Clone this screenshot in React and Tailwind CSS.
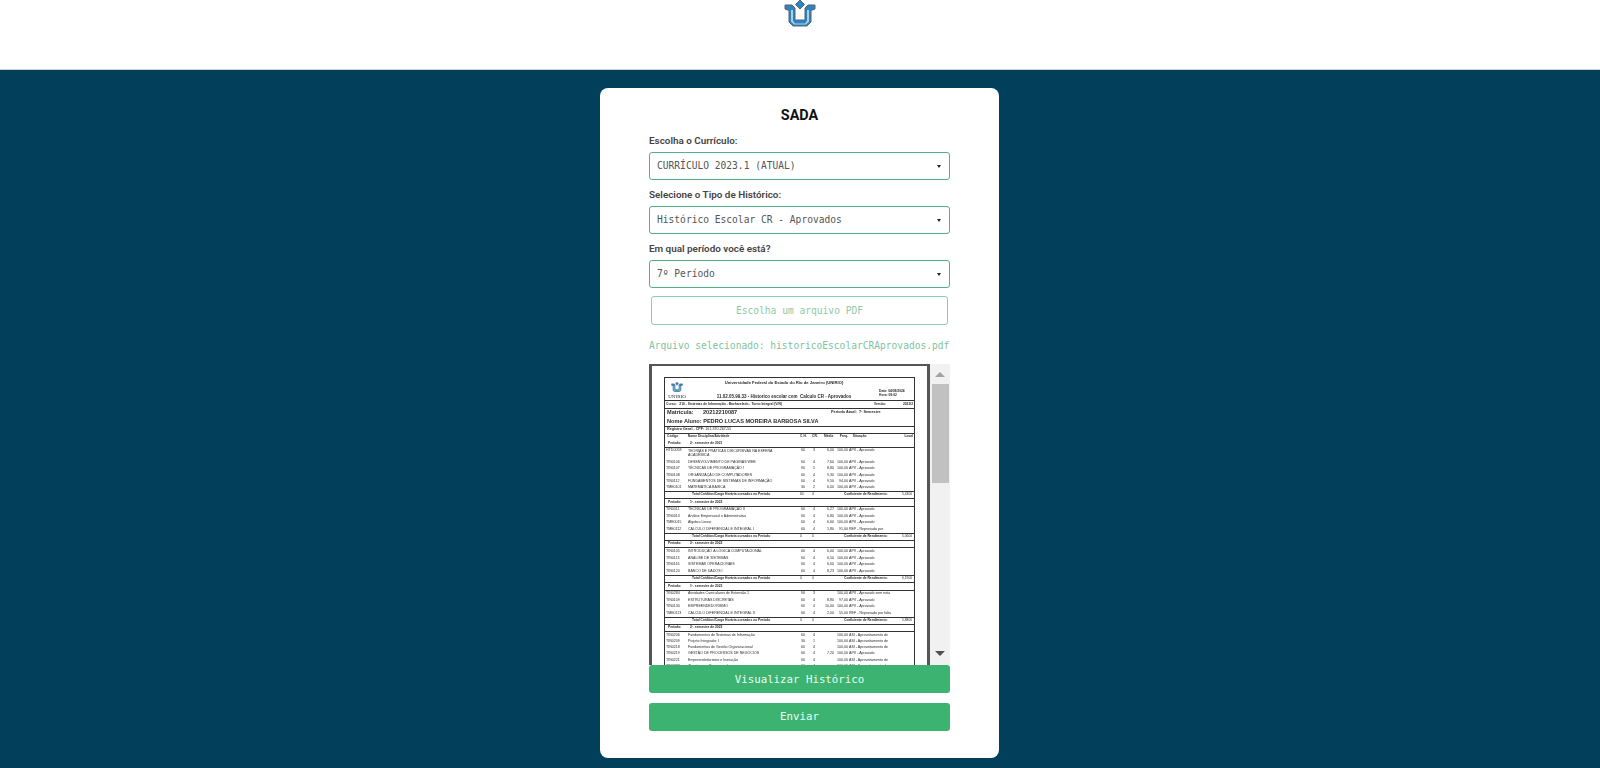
import React from 'react';

const mono = "font-['DejaVu_Sans_Mono',monospace]";

const Logo = ({ width = 32, height = 27 }) => (
    <svg width={width} height={height} viewBox="0 0 32 27" className="block">
        <path d="M16 0 L20.5 4.5 L16 9 L11.5 4.5 Z" fill="#2f86c4" stroke="#59636b" strokeWidth="1" />
        <path d="M1 5 H8 L11 8 V20 H21 V8 L24 5 H31 V9 L27 10.5 V22 L23 26 H9 L5 22 V10.5 L1 9 Z" fill="#2f83c2" stroke="#59636b" strokeWidth="1" />
        <path d="M7 10 H9 V21 L11 23.5 H21 L23 21 V10 H25 V21.5 L22 24.5 H10 L7 21.5 Z" fill="#a5d3ef" />
    </svg>
);

const SelectBox = ({ label, value }) => (
    <div>
        <div className="text-[9.9px] leading-[14px] font-semibold font-['Roboto',sans-serif] text-[#444444] mb-[4px]">{label}</div>
        <div className="h-[28px] rounded-[3px] border border-[#4fb387] pl-[7px] pr-[8px] flex items-center justify-between text-[#555555]">
            <span className={`${mono} text-[9.6px]`}>{value}</span>
            <span className="w-0 h-0 border-x-[2.5px] border-x-transparent border-t-[3px] border-t-[#222222]" />
        </div>
    </div>
);

const sem1 = [
    ['TIN0106', 'DESENVOLVIMENTO DE PÁGINAS WEB', '60', '4', '7,60', '100,00', 'APV - Aprovado'],
    ['TIN0107', 'TÉCNICAS DE PROGRAMAÇÃO I', '90', '5', '8,80', '100,00', 'APV - Aprovado'],
    ['TIN0108', 'ORGANIZAÇÃO DE COMPUTADORES', '60', '4', '9,30', '100,00', 'APV - Aprovado'],
    ['TIN0112', 'FUNDAMENTOS DE SISTEMAS DE INFORMAÇÃO', '60', '4', '9,50', '94,00', 'APV - Aprovado'],
    ['TME0101', 'MATEMÁTICA BÁSICA', '30', '2', '6,00', '100,00', 'APV - Aprovado'],
];
const sem2 = [
    ['TIN0011', 'TÉCNICAS DE PROGRAMAÇÃO II', '60', '4', '6,27', '100,00', 'APV - Aprovado'],
    ['TIN0013', 'Análise Empresarial e Administrativa', '60', '4', '6,80', '100,00', 'APV - Aprovado'],
    ['TME0015', 'Álgebra Linear', '60', '4', '6,60', '100,00', 'APV - Aprovado'],
    ['TME0112', 'CÁLCULO DIFERENCIAL E INTEGRAL I', '60', '4', '1,80', '91,00', 'REP - Reprovado por'],
];
const sem3 = [
    ['TIN0105', 'INTRODUÇÃO À LÓGICA COMPUTACIONAL', '60', '4', '6,00', '100,00', 'APV - Aprovado'],
    ['TIN0113', 'ANÁLISE DE SISTEMAS', '60', '4', '6,50', '100,00', 'APV - Aprovado'],
    ['TIN0116', 'SISTEMAS OPERACIONAIS', '60', '4', '6,60', '100,00', 'APV - Aprovado'],
    ['TIN0120', 'BANCO DE DADOS I', '60', '4', '8,23', '100,00', 'APV - Aprovado'],
];
const sem4 = [
    ['TIN0284', 'Atividades Curriculares de Extensão 1', '90', '3', '', '100,00', 'APV - Aprovado sem nota'],
    ['TIN0109', 'ESTRUTURAS DISCRETAS', '60', '4', '8,80', '97,00', 'APV - Aprovado'],
    ['TIN0130', 'EMPREENDEDORISMO', '60', '4', '10,00', '100,00', 'APV - Aprovado'],
    ['TME0113', 'CÁLCULO DIFERENCIAL E INTEGRAL II', '60', '4', '2,00', '55,00', 'REF - Reprovado por falta'],
];
const sem5 = [
    ['TIN0206', 'Fundamentos de Sistemas de Informação', '60', '4', '', '100,00', 'ASI - Aproveitamento de'],
    ['TIN0209', 'Projeto Integrador I', '30', '1', '', '100,00', 'ASI - Aproveitamento de'],
    ['TIN0218', 'Fundamentos de Gestão Organizacional', '60', '4', '', '100,00', 'ASI - Aproveitamento de'],
    ['TIN0219', 'GESTÃO DE PROCESSOS DE NEGÓCIOS', '60', '4', '7,20', '100,00', 'APV - Aprovado'],
    ['TIN0221', 'Empreendedorismo e Inovação', '60', '4', '', '100,00', 'ASI - Aproveitamento de'],
    ['TIN0222', 'Algoritmos e Programação', '60', '4', '', '100,00', 'ASI - Aproveitamento de'],
];

const CourseRow = ({ row, className = 'h-[6.3px]' }) => (
    <div className={`flex items-center pl-px text-[3.6px] ${className}`}>
        <span className="w-[22px] shrink-0">{row[0]}</span>
        <span className="w-[113px] shrink-0 whitespace-nowrap">{row[1]}</span>
        <span className="w-[12px] shrink-0">{row[2]}</span>
        <span className="w-[9px] shrink-0">{row[3]}</span>
        <span className="w-[12px] shrink-0 text-right">{row[4]}</span>
        <span className="w-[14px] shrink-0 text-right">{row[5]}</span>
        <span className="ml-px whitespace-nowrap">{row[6]}</span>
    </div>
);

const PeriodRow = ({ text }) => (
    <div className="h-[7.6px] flex items-center pl-[3px] font-bold border-b border-[#333333] whitespace-nowrap">
        <span className="w-[22px]">Período:</span>
        <span>{text}</span>
    </div>
);

const TotalRow = ({ ch, cr, coef }) => (
    <div className="h-[8px] flex items-center font-bold border-y border-[#333333] whitespace-nowrap">
        <span className="w-[135px] pl-[27px] shrink-0">Total Créditos/Carga Horária cursados no Período</span>
        <span className="w-[12px] shrink-0 font-normal">{ch}</span>
        <span className="w-[32px] shrink-0 font-normal">{cr}</span>
        <span className="w-[58px] shrink-0">Coeficiente de Rendimento:</span>
        <span className="font-normal">{coef}</span>
    </div>
);

const HistoryDoc = () => (
    <div className="ml-[12px] mt-[11px] w-[251px] border-x border-t border-[#333333] font-['Liberation_Sans',sans-serif] text-[3.3px] leading-none text-[#2b2b2b]">
        <div className="h-[23px] flex border-b border-[#333333]">
            <div className="w-[24px] shrink-0 flex flex-col items-center pt-[4px]">
                <Logo width={12} height={10} />
                <span className="font-['Liberation_Serif',serif] text-[5px] mt-[2px]">UNIRIO</span>
            </div>
            <div className="w-[190px] shrink-0 flex flex-col items-center justify-between pt-[3px] pb-[1px] font-bold whitespace-nowrap">
                <span className="text-[4.2px]">Universidade Federal do Estado do Rio de Janeiro (UNIRIO)</span>
                <span className="text-[4.5px]">11.02.05.99.33 - Historico escolar com&nbsp;&nbsp;Calculo CR - Aprovados</span>
            </div>
            <div className="pt-[12px] font-bold flex flex-col gap-[1px] whitespace-nowrap">
                <span>Data: 04/09/2024</span>
                <span>Hora: 09:02</span>
            </div>
        </div>
        <div className="h-[8px] flex items-center justify-between px-px font-bold border-b border-[#333333] whitespace-nowrap">
            <span className="w-[207px]">Curso:&nbsp;&nbsp;&nbsp;210 - Sistemas de Informação - Bacharelado - Turno Integral (V/N)</span>
            <span className="w-[28px]">Versão:</span>
            <span>2023/2</span>
        </div>
        <div className="h-[18px] flex flex-col justify-center gap-[3px] px-[2px] font-bold border-b border-[#333333] whitespace-nowrap">
            <div className="flex items-center">
                <span className="text-[5.6px] w-[36px]">Matrícula:</span>
                <span className="text-[5.6px] w-[128px]">20212210087</span>
                <span className="text-[3.8px]">Período Atual:&nbsp;&nbsp;7º Semestre</span>
            </div>
            <span className="text-[5.6px]">Nome Aluno: PEDRO LUCAS MOREIRA BARBOSA SILVA</span>
        </div>
        <div className="h-[7px] flex items-center px-[2px] text-[3.7px] border-b border-[#333333] whitespace-nowrap">
            <b>Registro Geral - CPF:</b>&nbsp;161.370.267-55
        </div>
        <div className="h-[6px] flex items-center pl-[2px] pr-px font-bold whitespace-nowrap">
            <span className="w-[21px]">Código</span>
            <span className="w-[113px]">Nome Disciplina/Atividade</span>
            <span className="w-[12px]">C.H.</span>
            <span className="w-[12px]">CR.</span>
            <span className="w-[16px]">Média</span>
            <span className="w-[13px]">Freq.</span>
            <span className="w-[52px]">Situação</span>
            <span>Local</span>
        </div>
        <PeriodRow text="2º. semestre de 2021" />
        <div className="h-[12px] flex pl-px pt-[1px] text-[3.6px]">
            <span className="w-[22px] shrink-0">HTD0058</span>
            <span className="w-[113px] shrink-0 leading-[4.4px]">TEORIAS E PRÁTICAS DISCURSIVAS NA ESFERA<br />ACADÊMICA</span>
            <span className="w-[12px] shrink-0">60</span>
            <span className="w-[9px] shrink-0">3</span>
            <span className="w-[12px] shrink-0 text-right">6,00</span>
            <span className="w-[14px] shrink-0 text-right">100,00</span>
            <span className="ml-px">APV - Aprovado</span>
        </div>
        {sem1.map((row) => <CourseRow key={row[0]} row={row} />)}
        <TotalRow ch="60" cr="4" coef="5,4300" />
        <PeriodRow text="1º. semestre de 2022" />
        {sem2.map((row) => <CourseRow key={row[0]} row={row} className="h-[6.5px]" />)}
        <TotalRow ch="0" cr="0" coef="5,0600" />
        <PeriodRow text="2º. semestre de 2022" />
        {sem3.map((row) => <CourseRow key={row[0]} row={row} className="h-[6.7px]" />)}
        <TotalRow ch="0" cr="0" coef="6,1900" />
        <PeriodRow text="1º. semestre de 2023" />
        {sem4.map((row) => <CourseRow key={row[0]} row={row} className="h-[6.5px]" />)}
        <TotalRow ch="0" cr="0" coef="5,8800" />
        <PeriodRow text="2º. semestre de 2023" />
        {sem5.map((row) => <CourseRow key={row[0]} row={row} />)}
    </div>
);

const PreviewScrollbar = () => (
    <div className="w-[20px] shrink-0 bg-[#f1f1f1] flex flex-col items-center">
        <span className="mt-[8px] w-0 h-0 border-x-[5px] border-x-transparent border-b-[5px] border-b-[#a3a3a3]" />
        <div className="mt-[7px] w-[17px] h-[99px] bg-[#c1c1c1]" />
        <span className="mt-auto mb-[9px] w-0 h-0 border-x-[5px] border-x-transparent border-t-[5px] border-t-[#505050]" />
    </div>
);

const App = () => {
    return (
        <div className="h-[768px] overflow-hidden flex flex-col bg-[#023f5b]">
            <header className="h-[70px] bg-white border-b border-[#c9d3d8] flex justify-center shrink-0">
                <div><Logo /></div>
            </header>
            <main className="flex justify-center pt-[18px] pr-px">
                <div className="w-[399px] h-[670px] bg-white rounded-[8px] px-[49px] pt-[19px]">
                    <h1 className="text-center text-[14.4px] leading-[18px] font-bold font-['Roboto',sans-serif] text-[#111111] mb-[9px]">SADA</h1>
                    <div className="flex flex-col gap-[8px]">
                        <SelectBox label="Escolha o Currículo:" value="CURRÍCULO 2023.1 (ATUAL)" />
                        <SelectBox label="Selecione o Tipo de Histórico:" value="Histórico Escolar CR - Aprovados" />
                        <SelectBox label="Em qual período você está?" value="7º Período" />
                    </div>
                    <div className={`mt-[8px] mx-[2px] h-[29px] pt-[2px] rounded-[3px] border border-[#8dcdb0] flex items-center justify-center text-[9.6px] text-[#8dcaa8] ${mono}`}>
                        Escolha um arquivo PDF
                    </div>
                    <div className={`mt-[14px] h-[14px] pt-px flex items-center whitespace-nowrap text-[9.6px] text-[#7fc29f] ${mono}`}>
                        Arquivo selecionado: historicoEscolarCRAprovados.pdf
                    </div>
                    <div className="mt-[11px] h-[301px] flex overflow-hidden">
                        <div className="w-[281px] shrink-0 h-[320px] bg-white border-x-[3px] border-t-[2px] border-[#555555] blur-[0.25px]">
                            <HistoryDoc />
                        </div>
                        <PreviewScrollbar />
                    </div>
                    <button className={`block w-full h-[28px] pt-[3px] rounded-[3px] bg-[#3cb371] text-[#eafff2] text-[10.75px] ${mono}`}>Visualizar Histórico</button>
                    <button className={`block w-full mt-[10px] h-[28px] pt-px rounded-[3px] bg-[#3cb371] text-[#eafff2] text-[10.75px] ${mono}`}>Enviar</button>
                </div>
            </main>
        </div>
    );
};

export default App;
